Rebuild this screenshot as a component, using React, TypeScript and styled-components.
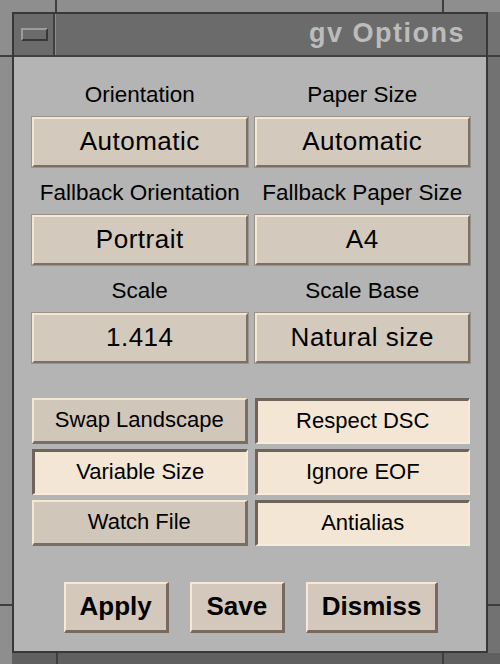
import React from 'react'
import styled, { createGlobalStyle } from 'styled-components'

const GlobalStyle = createGlobalStyle`
  html,
  body {
    margin: 0;
    padding: 0;
    width: 500px;
    height: 664px;
    overflow: hidden;
    background: #8c8c8c;
  }
  * {
    box-sizing: border-box;
  }
`

// window-manager frame: lighter top/left strip, darker bottom/right strip,
// small notches marking the resize corners
const Frame = styled.div`
  width: 500px;
  height: 664px;
  padding: 12px 12px 11px 12px;
  background:
    linear-gradient(#3e3e3e, #3e3e3e) 55px 0 / 2px 12px no-repeat,
    linear-gradient(#3e3e3e, #3e3e3e) 442px 0 / 2px 12px no-repeat,
    linear-gradient(#3e3e3e, #3e3e3e) 0 55px / 12px 2px no-repeat,
    linear-gradient(#3e3e3e, #3e3e3e) 0 604px / 12px 2px no-repeat,
    linear-gradient(#3e3e3e, #3e3e3e) 488px 55px / 12px 2px no-repeat,
    linear-gradient(#3e3e3e, #3e3e3e) 488px 604px / 12px 2px no-repeat,
    linear-gradient(#3e3e3e, #3e3e3e) 56px 653px / 2px 11px no-repeat,
    linear-gradient(#3e3e3e, #3e3e3e) 442px 653px / 2px 11px no-repeat,
    linear-gradient(#606060, #606060) 12px 653px / 488px 11px no-repeat,
    linear-gradient(#727272, #727272) 488px 12px / 12px 652px no-repeat,
    #8e8e8e;
`

const Window = styled.div`
  display: flex;
  flex-direction: column;
  height: 100%;
  border: 2px solid #383838;
  background: #b4b4b4;
`

const TitleBar = styled.div`
  display: flex;
  height: 43px;
  background: #6b6b6b;
  border-bottom: 2px solid #404040;
`

const MenuBox = styled.div`
  display: flex;
  align-items: center;
  justify-content: center;
  width: 41px;
  padding-left: 2px;
  border-right: 2px solid #404040;
  box-shadow: 1px 0 0 #8c8c8c;
`

const MenuGlyph = styled.div`
  width: 27px;
  height: 13px;
  border: 2px solid;
  border-color: #9c9c9c #383838 #383838 #9c9c9c;
  background: #6b6b6b;
`

const Title = styled.div`
  flex: 1;
  display: flex;
  align-items: center;
  justify-content: flex-end;
  padding: 0 21px 2px 0;
  font-family: 'Liberation Sans', Arial, sans-serif;
  font-weight: 700;
  font-size: 27px;
  letter-spacing: 1.5px;
  color: #bcbcbc;
`

const Body = styled.div`
  flex: 1;
  display: flex;
  flex-direction: column;
  padding: 25px 16px 18px 18px;
  font-family: 'Liberation Sans', Arial, sans-serif;
  color: #000;
`

const OptionGrid = styled.div`
  display: grid;
  grid-template-columns: 1fr 1fr;
  column-gap: 7px;
  row-gap: 13px;
`

const Field = styled.div`
  display: flex;
  flex-direction: column;
  gap: 9px;
`

const FieldLabel = styled.div`
  height: 26px;
  line-height: 26px;
  font-size: 22.5px;
  text-align: center;
  white-space: nowrap;
`

const MenuButton = styled.div`
  display: flex;
  align-items: center;
  justify-content: center;
  height: 50px;
  border: 2px solid;
  border-color: #f5e7d5 #7c7064 #7c7064 #f5e7d5;
  box-shadow: 0 0 0 1px #9b928a;
  background: #d4c9bd;
  font-size: 26px;
  letter-spacing: 0.5px;
  padding-bottom: 2px;
`

const ToggleGrid = styled.div`
  display: grid;
  grid-template-columns: 1fr 1fr;
  column-gap: 7px;
  row-gap: 5px;
  margin-top: 35px;
`

const Toggle = styled.div<{ $on?: boolean }>`
  display: flex;
  align-items: center;
  justify-content: center;
  height: 46px;
  border-style: solid;
  border-width: ${(p) => (p.$on ? '3px 2px 2px 3px' : '2px 3px 3px 2px')};
  border-color: ${(p) =>
    p.$on
      ? '#6f645a #f7ebdb #f7ebdb #6f645a'
      : '#f5e7d5 #7a6e62 #7a6e62 #f5e7d5'};
  background: ${(p) => (p.$on ? '#f3e6d5' : '#d1c6ba')};
  font-size: 22px;
  padding-bottom: 1px;
`

const ActionRow = styled.div`
  display: flex;
  justify-content: center;
  gap: 21px;
  margin-top: 36px;
`

const ActionButton = styled.div`
  display: flex;
  align-items: center;
  justify-content: center;
  min-width: 95px;
  height: 51px;
  padding: 0 14px 2px;
  border-style: solid;
  border-width: 2px 3px 3px 2px;
  border-color: #f7e9d7 #77695d #77695d #f7e9d7;
  background: #d3c8bb;
  font-size: 26px;
  font-weight: 700;
`

const options = [
  { label: 'Orientation', value: 'Automatic' },
  { label: 'Paper Size', value: 'Automatic' },
  { label: 'Fallback Orientation', value: 'Portrait' },
  { label: 'Fallback Paper Size', value: 'A4' },
  { label: 'Scale', value: '1.414' },
  { label: 'Scale Base', value: 'Natural size' },
]

const toggles = [
  { label: 'Swap Landscape', on: false },
  { label: 'Respect DSC', on: true },
  { label: 'Variable Size', on: true },
  { label: 'Ignore EOF', on: true },
  { label: 'Watch File', on: false },
  { label: 'Antialias', on: true },
]

export default function App() {
  return (
    <>
      <GlobalStyle />
      <Frame>
        <Window>
          <TitleBar>
            <MenuBox>
              <MenuGlyph />
            </MenuBox>
            <Title>gv Options</Title>
          </TitleBar>
          <Body>
            <OptionGrid>
              {options.map((o) => (
                <Field key={o.label}>
                  <FieldLabel>{o.label}</FieldLabel>
                  <MenuButton>{o.value}</MenuButton>
                </Field>
              ))}
            </OptionGrid>
            <ToggleGrid>
              {toggles.map((t) => (
                <Toggle key={t.label} $on={t.on}>
                  {t.label}
                </Toggle>
              ))}
            </ToggleGrid>
            <ActionRow>
              <ActionButton>Apply</ActionButton>
              <ActionButton>Save</ActionButton>
              <ActionButton>Dismiss</ActionButton>
            </ActionRow>
          </Body>
        </Window>
      </Frame>
    </>
  )
}
